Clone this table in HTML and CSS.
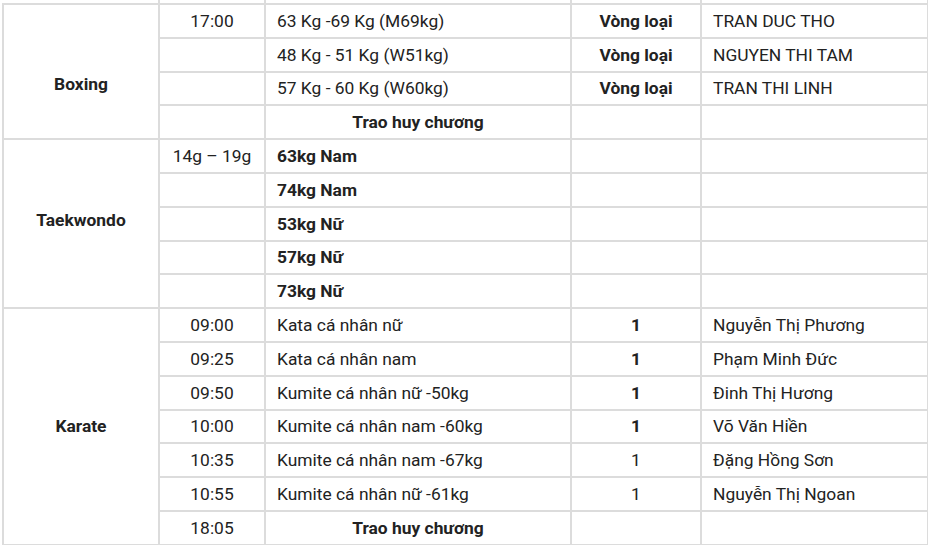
FILE: index.html
```html
<!DOCTYPE html>
<html lang="vi">
<head>
<meta charset="utf-8">
<title>Lịch thi đấu</title>
<link rel="stylesheet" href="styles.css">
</head>
<body>
<div class="wrap">
<table class="sched">
<colgroup>
<col class="c1"><col class="c2"><col class="c3"><col class="c4"><col class="c5">
</colgroup>
<tbody>
<tr class="stub"><td class="nol"></td><td></td><td></td><td></td><td class="nor"></td></tr>
<tr><td rowspan="4" class="sport first">Boxing</td><td class="ctr">17:00</td><td>63 Kg -69 Kg (M69kg)</td><td class="ctr b">Vòng loại</td><td>TRAN DUC THO</td></tr>
<tr><td></td><td>48 Kg - 51 Kg (W51kg)</td><td class="ctr b">Vòng loại</td><td>NGUYEN THI TAM</td></tr>
<tr><td></td><td>57 Kg - 60 Kg (W60kg)</td><td class="ctr b">Vòng loại</td><td>TRAN THI LINH</td></tr>
<tr><td></td><td class="ctr b">Trao huy chương</td><td></td><td></td></tr>
<tr><td rowspan="5" class="sport second">Taekwondo</td><td class="ctr">14g – 19g</td><td class="b">63kg Nam</td><td></td><td></td></tr>
<tr><td></td><td class="b">74kg Nam</td><td></td><td></td></tr>
<tr><td></td><td class="b">53kg Nữ</td><td></td><td></td></tr>
<tr><td></td><td class="b">57kg Nữ</td><td></td><td></td></tr>
<tr><td></td><td class="b">73kg Nữ</td><td></td><td></td></tr>
<tr><td rowspan="7" class="sport">Karate</td><td class="ctr">09:00</td><td>Kata cá nhân nữ</td><td class="ctr b">1</td><td>Nguyễn Thị Phương</td></tr>
<tr><td class="ctr">09:25</td><td>Kata cá nhân nam</td><td class="ctr b">1</td><td>Phạm Minh Đức</td></tr>
<tr><td class="ctr">09:50</td><td>Kumite cá nhân nữ -50kg</td><td class="ctr b">1</td><td>Đinh Thị Hương</td></tr>
<tr><td class="ctr">10:00</td><td>Kumite cá nhân nam -60kg</td><td class="ctr b">1</td><td>Võ Văn Hiền</td></tr>
<tr><td class="ctr">10:35</td><td>Kumite cá nhân nam -67kg</td><td class="ctr">1</td><td>Đặng Hồng Sơn</td></tr>
<tr><td class="ctr">10:55</td><td>Kumite cá nhân nữ -61kg</td><td class="ctr">1</td><td>Nguyễn Thị Ngoan</td></tr>
<tr><td class="ctr">18:05</td><td class="ctr b">Trao huy chương</td><td></td><td></td></tr>
</tbody>
</table>
</div>
</body>
</html>
```
FILE: styles.css
```css
html, body {
  margin: 0;
  padding: 0;
  background: #ffffff;
}
.wrap {
  padding: 0 0 0 2px;
  margin-top: -30px;
}
.sched {
  border-collapse: collapse;
  table-layout: fixed;
  width: 925px;
  font-family: Roboto, "Noto Sans", Arial, sans-serif;
  font-size: 17.4px;
  color: #222222;
}
.c1 { width: 156px; }
.c2 { width: 106px; }
.c3 { width: 306px; }
.c4 { width: 130px; }
.c5 { width: 227px; }
.sched td {
  border: 2px solid #dcdcdc;
  padding: 0 11px;
  height: 33.8px;
  line-height: 20px;
  vertical-align: middle;
  box-sizing: border-box;
  white-space: nowrap;
}
.sched tr.stub td {
  height: 34px;
  border-top: none;
}
.sched tr.stub td.nol { border-left: none; }
.ctr { text-align: center; }
.b { font-weight: 700; }
.sport {
  text-align: center;
  font-weight: 700;
}
.sched td.first { padding-top: 24px; }
.sched td.second { padding-bottom: 8px; }
```
